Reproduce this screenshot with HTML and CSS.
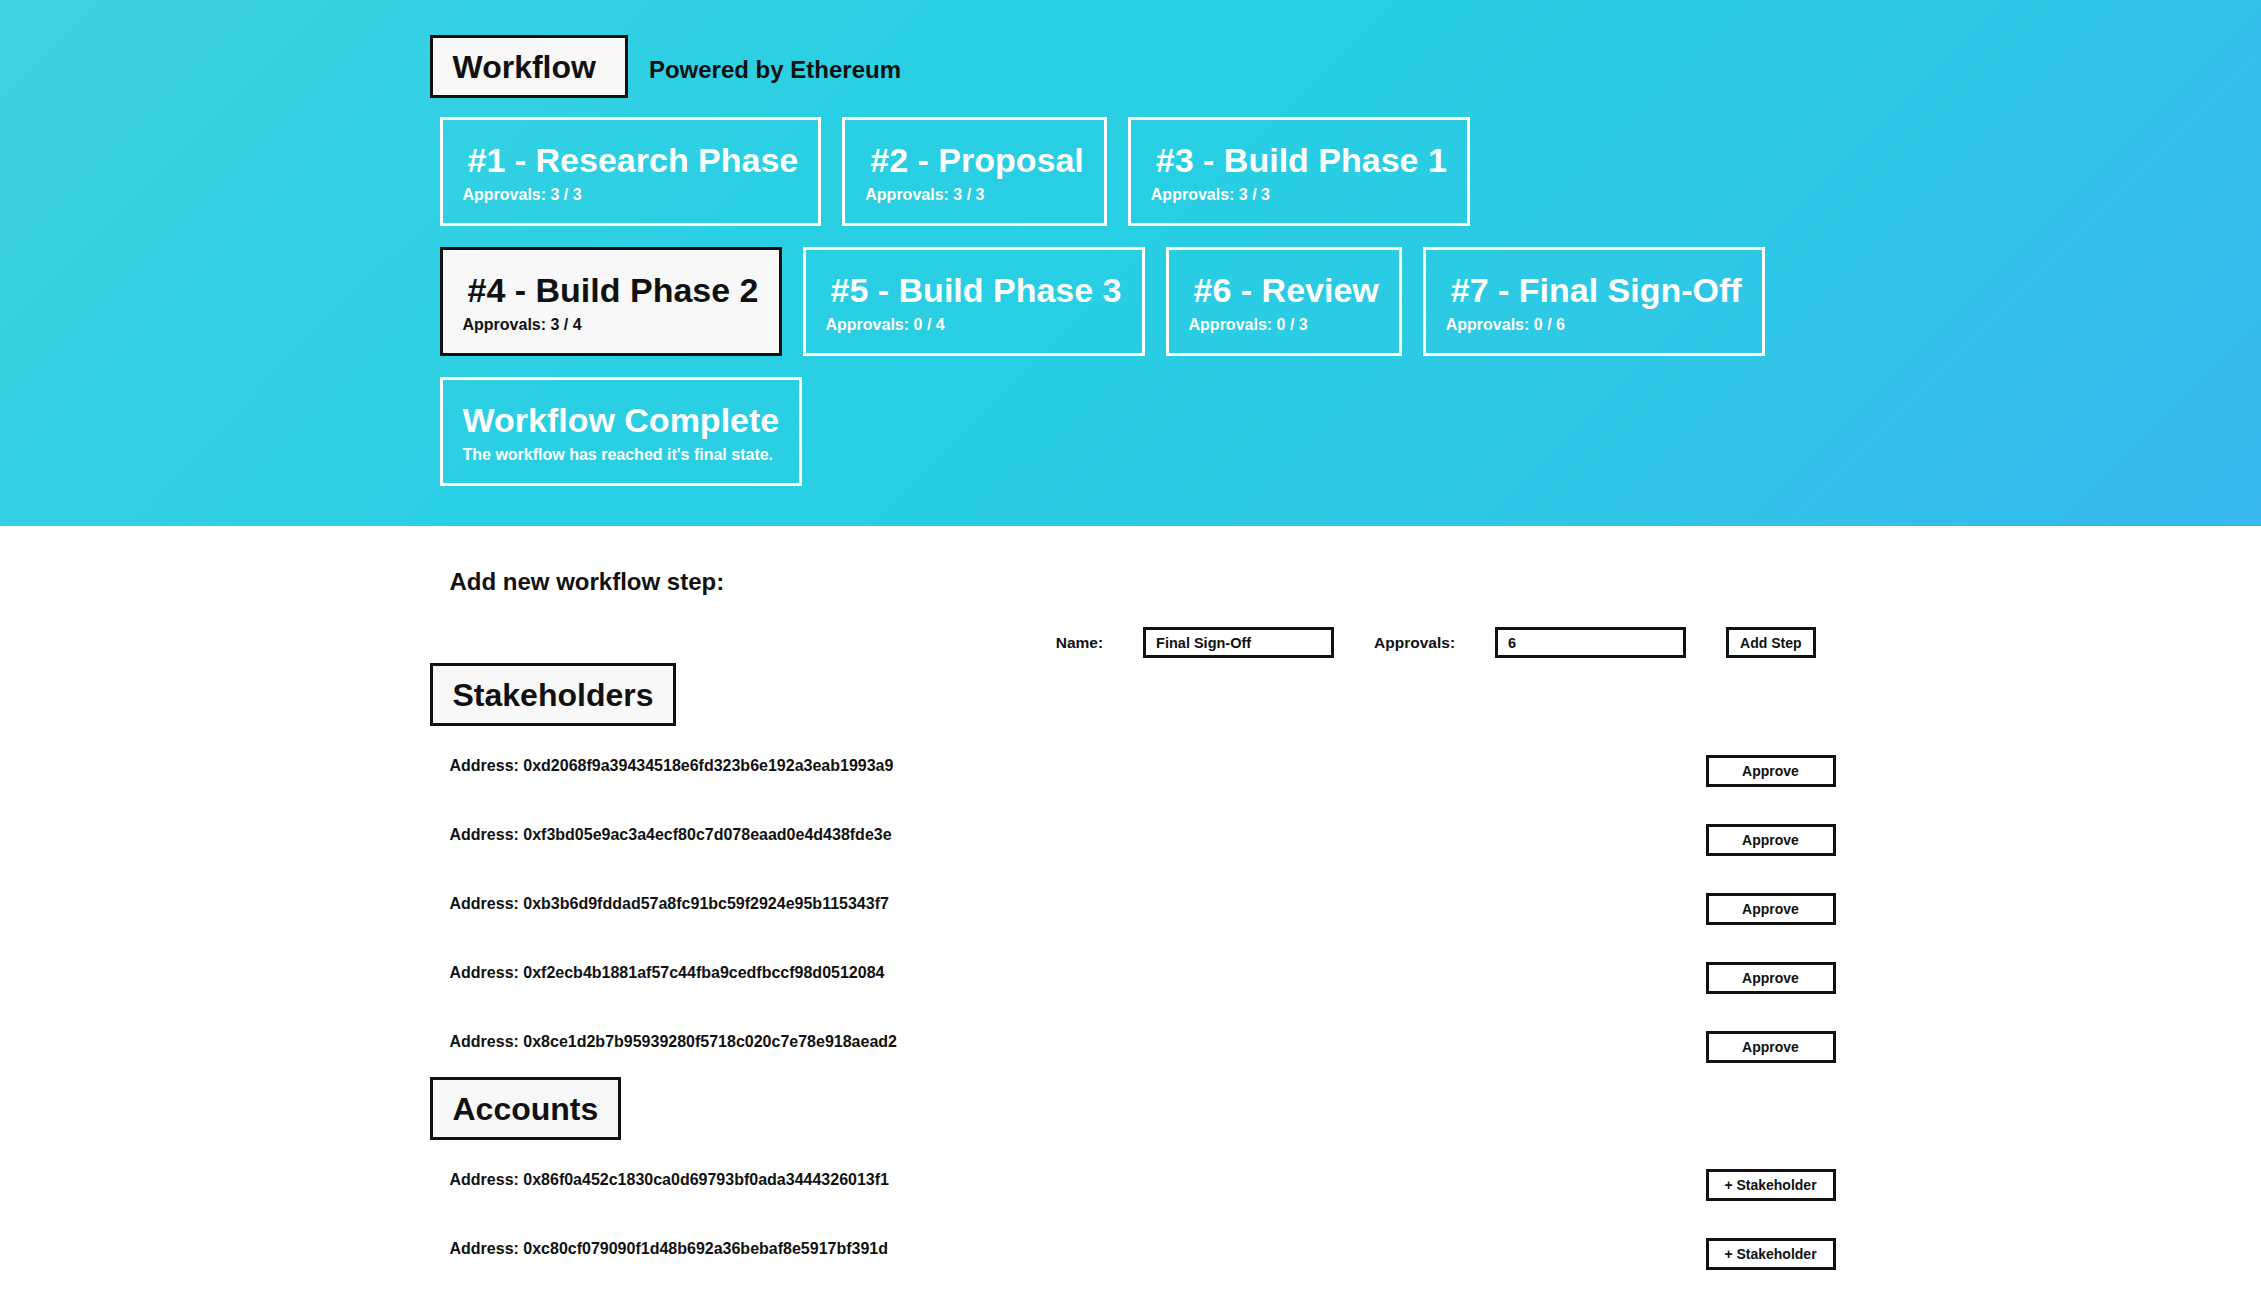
FILE: index.html
```html
<!DOCTYPE html>
<html lang="en">
<head>
<meta charset="utf-8">
<title>Workflow</title>
<link rel="stylesheet" href="styles.css">
</head>
<body>
<header class="hero">
  <div class="page">
    <div class="brand">
      <h1 class="title-box title-box--brand">Workflow</h1>
      <span class="tagline">Powered by Ethereum</span>
    </div>
    <ul class="steps">
      <li class="step">
        <h2 class="step-title"><span class="step-num">#1 - </span>Research Phase</h2>
        <p class="step-meta">Approvals: 3 / 3</p>
      </li>
      <li class="step">
        <h2 class="step-title"><span class="step-num">#2 - </span>Proposal</h2>
        <p class="step-meta">Approvals: 3 / 3</p>
      </li>
      <li class="step">
        <h2 class="step-title"><span class="step-num">#3 - </span>Build Phase 1</h2>
        <p class="step-meta">Approvals: 3 / 3</p>
      </li>
      <li class="step step--active">
        <h2 class="step-title"><span class="step-num">#4 - </span>Build Phase 2</h2>
        <p class="step-meta">Approvals: 3 / 4</p>
      </li>
      <li class="step">
        <h2 class="step-title"><span class="step-num">#5 - </span>Build Phase 3</h2>
        <p class="step-meta">Approvals: 0 / 4</p>
      </li>
      <li class="step">
        <h2 class="step-title"><span class="step-num">#6 - </span>Review</h2>
        <p class="step-meta">Approvals: 0 / 3</p>
      </li>
      <li class="step">
        <h2 class="step-title"><span class="step-num">#7 - </span>Final Sign-Off</h2>
        <p class="step-meta">Approvals: 0 / 6</p>
      </li>
      <li class="step step--final">
        <h2 class="step-title">Workflow Complete</h2>
        <p class="step-meta">The workflow has reached it's final state.</p>
      </li>
    </ul>
  </div>
</header>

<main class="page main">
  <h3 class="form-title">Add new workflow step:</h3>
  <form class="step-form">
    <label class="form-label" for="step-name">Name:</label>
    <input class="form-input" id="step-name" type="text" value="Final Sign-Off">
    <label class="form-label" for="step-approvals">Approvals:</label>
    <input class="form-input" id="step-approvals" type="text" value="6">
    <button class="btn btn--small" type="button">Add Step</button>
  </form>

  <h2 class="title-box">Stakeholders</h2>
  <ul class="addr-list">
    <li class="addr-row"><span class="addr">Address: 0xd2068f9a39434518e6fd323b6e192a3eab1993a9</span><button class="btn btn--wide" type="button">Approve</button></li>
    <li class="addr-row"><span class="addr">Address: 0xf3bd05e9ac3a4ecf80c7d078eaad0e4d438fde3e</span><button class="btn btn--wide" type="button">Approve</button></li>
    <li class="addr-row"><span class="addr">Address: 0xb3b6d9fddad57a8fc91bc59f2924e95b115343f7</span><button class="btn btn--wide" type="button">Approve</button></li>
    <li class="addr-row"><span class="addr">Address: 0xf2ecb4b1881af57c44fba9cedfbccf98d0512084</span><button class="btn btn--wide" type="button">Approve</button></li>
    <li class="addr-row"><span class="addr">Address: 0x8ce1d2b7b95939280f5718c020c7e78e918aead2</span><button class="btn btn--wide" type="button">Approve</button></li>
  </ul>

  <h2 class="title-box">Accounts</h2>
  <ul class="addr-list">
    <li class="addr-row"><span class="addr">Address: 0x86f0a452c1830ca0d69793bf0ada3444326013f1</span><button class="btn btn--wide" type="button">+ Stakeholder</button></li>
    <li class="addr-row"><span class="addr">Address: 0xc80cf079090f1d48b692a36bebaf8e5917bf391d</span><button class="btn btn--wide" type="button">+ Stakeholder</button></li>
  </ul>
</main>
</body>
</html>
```

FILE: styles.css
```css
* {
  box-sizing: border-box;
}

html, body {
  margin: 0;
  padding: 0;
  background: #ffffff;
}

body {
  font-family: "Liberation Sans", Arial, Helvetica, sans-serif;
  font-weight: bold;
  color: #111111;
}

.page {
  width: 1406px;
  margin-left: calc(50% - 701px);
}

/* ---------- Hero ---------- */
.hero {
  height: 526px;
  padding-top: 35px;
  background: linear-gradient(135deg, #3ed2e4 0%, #2bcfe3 35%, #28cee3 50%, #2ec8e6 70%, #37b8ed 100%);
}

.brand {
  display: flex;
  align-items: baseline;
  gap: 21px;
}

.title-box {
  width: fit-content;
  margin: 0;
  padding: 11px 20px 9px;
  border: 3px solid #111111;
  background: #f8f8f8;
  font-size: 32px;
  line-height: 37px;
  font-weight: bold;
  color: #111111;
}

.title-box--brand {
  padding-right: 29px;
}

.tagline {
  font-size: 24px;
  line-height: 28px;
  color: #111111;
}

.steps {
  list-style: none;
  margin: 19px 0 0;
  padding: 0 20px 0 10px;
  display: flex;
  flex-wrap: wrap;
  gap: 21px;
}

.step {
  height: 109px;
  padding: 21px 20px 19px;
  border: 3px solid #ffffff;
  color: #ffffff;
}

.step--active {
  background: #f8f8f8;
  border-color: #111111;
  color: #111111;
}

.step-title {
  margin: 0 0 6px;
  padding-left: 5px;
  font-size: 34px;
  line-height: 39px;
  white-space: nowrap;
}

.step--final .step-title {
  padding-left: 0;
}

.step-meta {
  margin: 0;
  font-size: 16px;
  line-height: 18px;
  white-space: nowrap;
}

/* ---------- Main ---------- */
.main {
  padding-top: 42px;
}

.form-title {
  margin: 0;
  padding-left: 20px;
  font-size: 24px;
  line-height: 28px;
}

.step-form {
  margin: 31px 0 0;
  padding-right: 20px;
  display: flex;
  justify-content: flex-end;
  align-items: center;
  gap: 40px;
  height: 31px;
}

.form-label {
  font-size: 15.5px;
  line-height: 18px;
}

.form-input {
  width: 191px;
  height: 31px;
  padding: 0 10px;
  border: 3px solid #111111;
  border-radius: 0;
  background: #ffffff;
  font-family: "Liberation Sans", Arial, sans-serif;
  font-weight: bold;
  font-size: 14.5px;
  color: #111111;
  outline: none;
}

.btn {
  height: 32px;
  padding: 0;
  border: 3px solid #111111;
  border-radius: 0;
  background: #ffffff;
  font-family: "Liberation Sans", Arial, sans-serif;
  font-weight: bold;
  font-size: 14px;
  color: #111111;
  cursor: pointer;
}

.btn--small {
  height: 31px;
  padding: 0 11px;
}

.btn--wide {
  width: 130px;
  flex: none;
}

.main .title-box {
  margin-top: 5px;
}

.addr-list {
  list-style: none;
  margin: 29px 0 14px;
  padding: 0;
  display: flex;
  flex-direction: column;
  gap: 37px;
}

.addr-row {
  display: flex;
  justify-content: space-between;
  align-items: flex-start;
}

.addr {
  padding-left: 20px;
  padding-top: 2px;
  font-size: 16px;
  line-height: 18px;
}
```
